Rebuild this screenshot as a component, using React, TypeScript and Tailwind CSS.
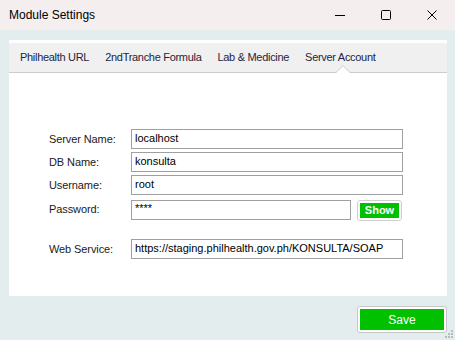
import React from "react";

const tabs = ["Philhealth URL", "2ndTranche Formula", "Lab & Medicine", "Server Account"];

const Field: React.FC<{ label: string; value: string; className?: string }> = ({ label, value, className }) => (
  <div className={`flex items-center ${className ?? ""}`}>
    <span className="w-[82px] text-[11px] tracking-[-0.1px] text-[#1a1a1a]">{label}</span>
    <div className="w-[272px] h-[20px] border border-[#a0a0a0] bg-white px-[3px] text-[11px] leading-[17px] text-black">
      {value}
    </div>
  </div>
);

const App: React.FC = () => {
  return (
    <div className="w-[455px] h-[340px] flex flex-col bg-[#e4edee] overflow-hidden font-['Liberation_Sans',Arial,sans-serif]">
      {/* Title bar */}
      <div className="h-[30px] flex items-center bg-[#f5eeee] pl-[9px]">
        <span className="text-[12px] text-black flex-1">Module Settings</span>
        <div className="flex items-center h-full">
          <div className="w-[46px] h-full flex items-center justify-center">
            <svg width="10" height="10" viewBox="0 0 10 10">
              <line x1="0" y1="5.5" x2="10" y2="5.5" stroke="#000" strokeWidth="1" />
            </svg>
          </div>
          <div className="w-[46px] h-full flex items-center justify-center">
            <svg width="10" height="10" viewBox="0 0 10 10">
              <rect x="0.5" y="0.5" width="9" height="9" rx="1" fill="none" stroke="#000" strokeWidth="1" />
            </svg>
          </div>
          <div className="w-[46px] h-full flex items-center justify-center">
            <svg width="10" height="10" viewBox="0 0 10 10">
              <path d="M0.5 0.5 L9.5 9.5 M9.5 0.5 L0.5 9.5" stroke="#000" strokeWidth="1" />
            </svg>
          </div>
        </div>
      </div>

      {/* Panel */}
      <div className="mt-[10px] ml-[9px] w-[438px] h-[256px] bg-white pt-[3px] flex flex-col">
        <div className="relative h-[30px] bg-[#f0f0f0] border-b border-[#cccccc] flex items-center pl-[11px] gap-[16px] text-[11px] tracking-[-0.3px] text-[#1e2440]">
          {tabs.map((t) => (
            <span key={t}>{t}</span>
          ))}
          <svg className="absolute left-[327px] bottom-[-1px]" width="14" height="8" viewBox="0 0 14 8">
            <path d="M0 8 L7 1 L14 8 Z" fill="white" />
            <path d="M0 7.5 L7 0.5 L14 7.5" fill="none" stroke="#cccccc" strokeWidth="1" />
          </svg>
        </div>

        <div className="pl-[40px] pt-[56px] flex flex-col">
          <Field label="Server Name:" value="localhost" />
          <Field label="DB Name:" value="konsulta" className="mt-[3px]" />
          <Field label="Username:" value="root" className="mt-[3px]" />
          <div className="flex items-center mt-[3px]">
            <span className="w-[82px] text-[11px] tracking-[-0.1px] text-[#1a1a1a]">Password:</span>
            <div className="w-[220px] h-[20px] border border-[#a0a0a0] bg-white px-[3px] text-[11px] leading-[15px] text-black">
              ****
            </div>
            <button className="ml-[6px] mt-[2px] w-[45px] h-[21px] rounded-[3px] border border-[#cfcfcf] bg-white p-[2px]">
              <span className="flex h-full w-full items-center justify-center bg-[#00c000] text-[11px] font-bold text-white">
                Show
              </span>
            </button>
          </div>
          <Field label="Web Service:" value="https://staging.philhealth.gov.ph/KONSULTA/SOAP" className="mt-[18px]" />
        </div>
      </div>

      {/* Footer */}
      <div className="relative flex-1 flex justify-end pr-[8px] pt-[10px]">
        <button className="w-[90px] h-[27px] rounded-[3px] border border-[#c8c8c8] bg-white p-[2px]">
          <span className="flex h-full w-full items-center justify-center bg-[#00c000] text-[12px] text-white">
            Save
          </span>
        </button>
        <svg className="absolute right-[1px] bottom-[1px]" width="10" height="10" viewBox="0 0 10 10">
          <rect x="7" y="1" width="2" height="2" fill="#b8bcbd" />
          <rect x="4" y="4" width="2" height="2" fill="#b8bcbd" />
          <rect x="7" y="4" width="2" height="2" fill="#b8bcbd" />
          <rect x="1" y="7" width="2" height="2" fill="#b8bcbd" />
          <rect x="4" y="7" width="2" height="2" fill="#b8bcbd" />
          <rect x="7" y="7" width="2" height="2" fill="#b8bcbd" />
        </svg>
      </div>
    </div>
  );
};

export default App;
